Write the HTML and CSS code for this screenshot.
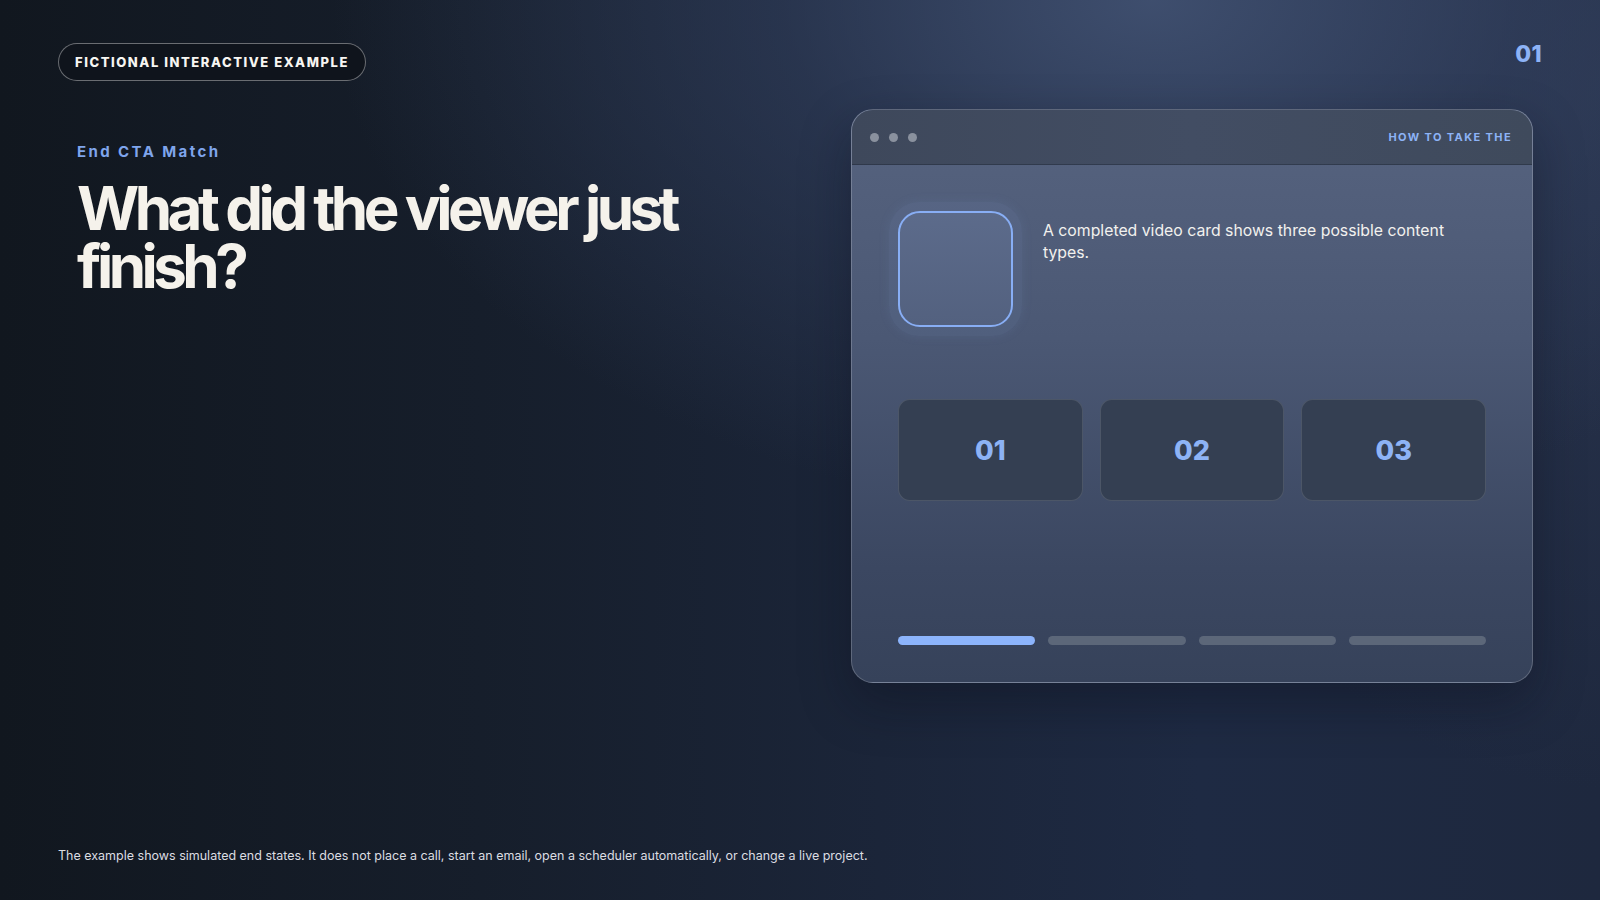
FILE: index.html
```html
<!DOCTYPE html>
<html lang="en">
<head>
<meta charset="utf-8">
<title>End CTA Match</title>
<link rel="stylesheet" href="styles.css">
</head>
<body>
<div class="page">
  <header class="top">
    <div class="pill">FICTIONAL INTERACTIVE EXAMPLE</div>
    <div class="slide-num">01</div>
  </header>
  <main class="main">
    <section class="intro">
      <div class="eyebrow">End CTA Match</div>
      <h1 class="headline">What did the viewer just finish?</h1>
    </section>
    <section class="window">
      <div class="window-bar">
        <div class="dots"><span></span><span></span><span></span></div>
        <div class="window-title">HOW TO TAKE THE</div>
      </div>
      <div class="window-body">
        <div class="prompt">
          <div class="thumb-glow"><div class="thumb"></div></div>
          <p class="prompt-text">A completed video card shows three possible content types.</p>
        </div>
        <div class="options">
          <div class="option">01</div>
          <div class="option">02</div>
          <div class="option">03</div>
        </div>
        <div class="progress">
          <span class="seg active"></span>
          <span class="seg"></span>
          <span class="seg"></span>
          <span class="seg"></span>
        </div>
      </div>
    </section>
  </main>
  <footer class="foot">The example shows simulated end states. It does not place a call, start an email, open a scheduler automatically, or change a live project.</footer>
</div>
</body>
</html>
```

FILE: styles.css
```css
* { box-sizing: border-box; }
html, body { margin: 0; padding: 0; }
body {
  width: 1600px;
  height: 900px;
  overflow: hidden;
  font-family: Inter, "Noto Sans", "Liberation Sans", sans-serif;
  color: #f4f1ea;
  background:
    radial-gradient(ellipse 820px 520px at 72% 0%, rgba(64, 80, 112, 0.95) 0%, rgba(50, 64, 94, 0.6) 45%, rgba(30, 40, 62, 0) 100%),
    radial-gradient(ellipse 500px 700px at 100% 10%, rgba(48, 60, 88, 0.6) 0%, rgba(30, 40, 62, 0) 100%),
    linear-gradient(90deg, #11171f 0%, #161e2b 30%, #1b2539 55%, #1e2a43 75%, #1e283e 100%);
}
.page {
  height: 900px;
  display: flex;
  flex-direction: column;
  padding: 43px 58px 35px 58px;
}
.top {
  display: flex;
  justify-content: space-between;
  align-items: flex-start;
}
.pill {
  height: 38px;
  display: flex;
  align-items: center;
  padding: 0 16px;
  border: 1px solid rgba(255, 255, 255, 0.38);
  border-radius: 19px;
  background: #0f141c;
  color: #f7f6f2;
  font-size: 13px;
  font-weight: 800;
  letter-spacing: 1.55px;
}
.slide-num {
  margin-top: -3px;
  font-size: 23px;
  font-weight: 800;
  color: #8db3f6;
  letter-spacing: 0.3px;
}
.main {
  display: flex;
  justify-content: space-between;
  align-items: flex-start;
  margin-top: 28px;
  padding-right: 9px;
}
.intro {
  padding: 33px 0 0 19px;
}
.eyebrow {
  font-size: 15px;
  line-height: 20px;
  font-weight: 700;
  letter-spacing: 2.4px;
  color: #7fa5ec;
}
.headline {
  margin: 17px 0 0 0;
  width: 640px;
  font-size: 60px;
  line-height: 58px;
  font-weight: 700;
  letter-spacing: -0.075em;
  color: #f5f2eb;
}
.window {
  width: 682px;
  height: 574px;
  border-radius: 22px;
  border: 1px solid rgba(255, 255, 255, 0.2);
  overflow: hidden;
  display: flex;
  flex-direction: column;
  background: linear-gradient(180deg, #56637f 0%, #4b5874 40%, #3b4761 80%, #36425a 100%);
  box-shadow: 0 20px 50px rgba(8, 12, 22, 0.35);
}
.window-bar {
  height: 55px;
  flex: none;
  display: flex;
  align-items: center;
  justify-content: space-between;
  padding: 0 20px 0 18px;
  background: linear-gradient(90deg, #3e485b 0%, #424d63 50%, #3f4a5c 100%);
  border-bottom: 1px solid rgba(20, 28, 42, 0.35);
}
.dots { display: flex; gap: 10px; }
.dots span {
  width: 9px;
  height: 9px;
  border-radius: 50%;
  background: #8a919e;
}
.window-title {
  font-size: 11px;
  font-weight: 700;
  letter-spacing: 1.4px;
  color: #8db3f6;
}
.window-body {
  flex: 1;
  display: flex;
  flex-direction: column;
  padding: 46px 46px 37px 46px;
}
.prompt {
  display: flex;
  align-items: flex-start;
  gap: 30px;
}
.thumb-glow {
  flex: none;
  padding: 9px;
  margin: -9px;
  border-radius: 30px;
  background: rgba(120, 145, 200, 0.12);
  box-shadow: 0 0 8px 2px rgba(120, 145, 200, 0.1);
}
.thumb {
  width: 115px;
  height: 116px;
  border-radius: 22px;
  border: 2.5px solid #88aef5;
  background: linear-gradient(180deg, #5c6b8b 0%, #53617f 100%);
}
.prompt-text {
  margin: 9px 0 0 0;
  font-size: 15.8px;
  line-height: 21.5px;
  color: #f2f1ee;
}
.options {
  margin-top: 72px;
  display: grid;
  grid-template-columns: repeat(3, 1fr);
  gap: 17px;
}
.option {
  height: 102px;
  display: flex;
  align-items: center;
  justify-content: center;
  border-radius: 12px;
  border: 1px solid rgba(255, 255, 255, 0.12);
  background: #343f52;
  font-size: 27px;
  font-weight: 800;
  color: #8db3f6;
}
.progress {
  margin-top: auto;
  display: grid;
  grid-template-columns: repeat(4, 1fr);
  gap: 13px;
}
.seg {
  height: 9px;
  border-radius: 5px;
  background: #5c6779;
}
.seg.active { background: #8cb4fc; }
.foot {
  margin-top: auto;
  font-size: 12.5px;
  line-height: 18px;
  color: #dcdde2;
}
```
